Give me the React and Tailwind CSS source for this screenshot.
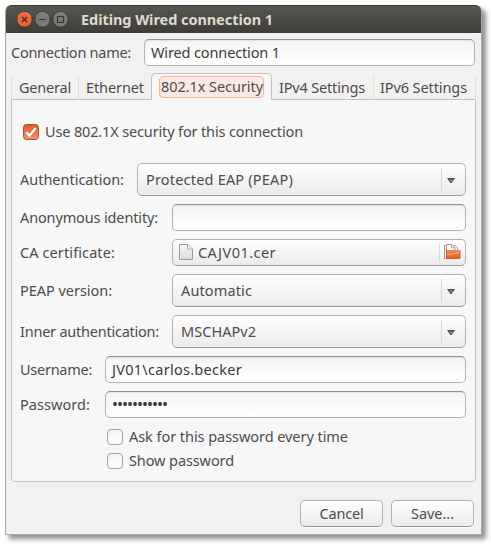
import { useLayoutEffect, useRef, useState } from "react";

// Single-line text whose tracking is adjusted so that it spans `width` pixels.
function Label({ width, className = "", children }) {
  const ref = useRef(null);
  const [spacing, setSpacing] = useState(0);
  useLayoutEffect(() => {
    const natural = ref.current.getBoundingClientRect().width;
    setSpacing((width - natural) / children.length);
  }, [width, children]);
  return (
    <span
      ref={ref}
      className={`inline-block shrink-0 whitespace-pre pb-[2px] ${className}`}
      style={{ letterSpacing: `${spacing}px` }}
    >
      {children}
    </span>
  );
}

const raised =
  "rounded-[5px] border border-[#b5b3b1] border-b-[#989694] bg-linear-to-b from-white to-[#eceaea] shadow-[0_1px_1px_rgba(255,255,255,0.9)]";
const field =
  "rounded-[5px] border border-[#b4b2b0] border-t-[#949290] bg-linear-to-b from-[#f4f4f4] to-white shadow-[inset_0_1px_1px_rgba(0,0,0,0.08)]";

function Row({ label, labelWidth, column, tall, children }) {
  return (
    <div className={`flex items-center ${tall ? "h-[33px]" : "h-[27px]"}`}>
      <div className={`flex shrink-0 ${column}`}>
        <Label width={labelWidth}>{label}</Label>
      </div>
      {children}
    </div>
  );
}

function Select({ value, width }) {
  return (
    <div className={`flex h-full min-w-0 flex-1 items-center pl-2 pr-[10px] ${raised}`}>
      <Label width={width}>{value}</Label>
      <div className="ml-auto flex h-[23px] items-center border-l border-[#d9d7d6] pl-[5px]">
        <svg className="mt-[2px]" width="8" height="6" viewBox="0 0 8 6">
          <path d="M.7 .5h6.600L4 5z" fill="#777" stroke="#484848" strokeWidth="1" />
        </svg>
      </div>
    </div>
  );
}

function Field({ value, width, textClass = "" }) {
  return (
    <div className={`flex h-full min-w-0 flex-1 items-center pl-[6px] text-[#3c3b37] ${field}`}>
      {value && <Label width={width} className={textClass}>{value}</Label>}
    </div>
  );
}

function EmptyCheck({ label, width }) {
  return (
    <div className="flex h-6 items-center gap-[6px]">
      <div className="size-4 rounded-[4px] border border-[#a5a3a1] bg-linear-to-b from-[#f3f3f3] to-white" />
      <Label width={width}>{label}</Label>
    </div>
  );
}

function FileIcon() {
  return (
    <svg className="-mt-px" width="14" height="16" viewBox="0 0 14 16">
      <defs>
        <linearGradient id="page" x1="0" y1="0" x2="0" y2="1">
          <stop offset="0" stopColor="#f6f6f6" />
          <stop offset="1" stopColor="#dcdcdc" />
        </linearGradient>
      </defs>
      <path d="M.5 .5h8l5 4.500v10.500H.5z" fill="url(#page)" stroke="#999" />
      <path d="M8.500 .8v4.200h4.700" fill="#fff" stroke="#aaa" />
    </svg>
  );
}

function FolderIcon() {
  return (
    <svg className="-mt-px" width="17" height="16" viewBox="0 0 17 16">
      <defs>
        <linearGradient id="folder" x1="0" y1="0" x2="0" y2="1">
          <stop offset="0" stopColor="#ef8a58" />
          <stop offset="1" stopColor="#ea5a24" />
        </linearGradient>
      </defs>
      <path d="M2 14.500H.5v-13h3" fill="#eee" stroke="#999" />
      <path d="M9.500 1.500h2l2 2.500v3" fill="#f4f4f4" stroke="#aaa" />
      <path d="M2.500 14V.5h5.500l3 3V7" fill="#f8f8f8" stroke="#999" />
      <path d="M7.500 .8v3h3" fill="none" stroke="#aaa" />
      <path d="M2.500 14.500v-8h13.500v7.500q0 .5-.5 .5z" fill="url(#folder)" stroke="#dc5a26" />
      <path d="M3 6.500h13" stroke="#e98556" />
      <path d="M3.200 10.500q6 0 12.300-2" fill="none" stroke="#f8b48e" strokeWidth=".8" />
    </svg>
  );
}

function WindowButton({ kind }) {
  const close = kind === "close";
  return (
    <svg width="17" height="17" viewBox="0 0 17 17">
      <circle cx="8.500" cy="8.500" r="7.600" fill={close ? "#ee6637" : "#7b7a74"} stroke={close ? "#46352d" : "#383733"} strokeWidth=".8" />
      <path d="M2.200 5.500a7 7 0 0 1 12.600 0" fill="none" stroke={close ? "#f7a27d" : "#96948c"} strokeWidth=".8" />
      {close && <path d="M6 6l5 5M11 6l-5 5" stroke="#4b2a1c" strokeWidth="1.400" />}
      {kind === "minimize" && <path d="M5 8.500h7" stroke="#3a3935" strokeWidth="1.200" />}
      {kind === "maximize" && <path d="M5.500 5.500h6v6h-6z" fill="none" stroke="#3a3935" strokeWidth="1.200" />}
    </svg>
  );
}

function Tab({ className, width, children }) {
  return (
    <div className={`flex h-6 items-center border-r ${className}`}>
      <Label width={width}>{children}</Label>
    </div>
  );
}

export default function App() {
  return (
    <div className="h-[544px] w-[491px] overflow-hidden bg-white pl-[5px] pt-[5px] font-['Noto_Sans','Open_Sans',sans-serif] text-[14.5px] leading-5 text-[#4c4c4c]">
      <div className="flex h-[530px] w-[477px] flex-col overflow-hidden rounded-t-[6px] border-b border-l border-r border-[#aaa8a6] bg-[#f2f1f0] shadow-[4px_4px_5px_rgba(0,0,0,0.45)]">
        <div className="-mx-px flex h-7 shrink-0 items-center rounded-t-[6px] border-t border-[#3b3a36] bg-linear-to-b from-[#575650] to-[#3e3d39] pl-[11px] text-[#dfdbd2]">
          <div className="flex gap-px">
            <WindowButton kind="close" />
            <WindowButton kind="minimize" />
            <WindowButton kind="maximize" />
          </div>
          <Label className="ml-3 font-bold" width={192}>Editing Wired connection 1</Label>
        </div>

        <div className="mt-[6px] flex h-[27px] shrink-0 items-center pl-[5px] pr-[6px]">
          <div className="flex w-[133px] shrink-0">
            <Label width={120}>Connection name:</Label>
          </div>
          <Field value="Wired connection 1" width={129} />
        </div>

        <div className="z-10 mx-[5px] mt-[7px] -mb-px flex h-[27px] shrink-0 items-end">
          <Tab className="w-[68px] border-l border-[#e0dfde] pl-[7px]" width={52}>General</Tab>
          <Tab className="w-[72px] border-transparent pl-[7px]" width={58}>Ethernet</Tab>
          <div className="flex h-[27px] w-[121px] rounded-t-[5px] border border-b-0 border-[#c3c1c0] bg-[#f7f7f7] pl-[7px] pt-[2px]">
            <div className="flex h-[22px] w-[105px] items-center rounded-[4px] border border-[#f5b497] bg-[#fae9e3] pl-px">
              <Label width={102}>802.1x Security</Label>
            </div>
          </div>
          <Tab className="w-[102px] border-[#e0dfde] pl-[7px]" width={86}>IPv4 Settings</Tab>
          <Tab className="w-[102px] border-[#e0dfde] pl-[6px]" width={87}>IPv6 Settings</Tab>
        </div>

        <div className="mx-[5px] flex h-[383px] shrink-0 flex-col rounded-b-[4px] border border-[#c3c1c0] bg-[#f7f7f7] pl-2 pr-[9px]">
          <div className="mt-[22px] flex h-5 shrink-0 items-center gap-[6px] pl-[3px]">
            <svg width="16" height="16" viewBox="0 0 16 16">
              <defs>
                <linearGradient id="check" x1="0" y1="0" x2="0" y2="1">
                  <stop offset="0" stopColor="#d95c28" />
                  <stop offset="1" stopColor="#ec9875" />
                </linearGradient>
              </defs>
              <rect x=".5" y=".5" width="15" height="15" rx="3" fill="url(#check)" stroke="#a85331" />
              <path d="M3.200 8.200l3.200 3.500 6.300-7.600" fill="none" stroke="#fff" strokeWidth="2.200" />
            </svg>
            <Label width={258}>Use 802.1X security for this connection</Label>
          </div>

          <div className="mt-[21px] flex flex-col gap-2">
            <Row label="Authentication:" labelWidth={104} column="w-[117px]" tall>
              <Select value="Protected EAP (PEAP)" width={147} />
            </Row>
            <Row label="Anonymous identity:" labelWidth={138} column="w-[152px]">
              <Field />
            </Row>
            <Row label="CA certificate:" labelWidth={95} column="w-[152px]">
              <div className={`flex h-full min-w-0 flex-1 items-center pl-[6px] pr-[4px] ${raised}`}>
                <FileIcon />
                <Label className="ml-[5px]" width={78}>CAJV01.cer</Label>
                <div className="ml-auto flex h-[18px] items-center border-l border-[#dddbda] pl-[4px]">
                  <FolderIcon />
                </div>
              </div>
            </Row>
            <Row label="PEAP version:" labelWidth={92} column="w-[152px]" tall>
              <Select value="Automatic" width={71} />
            </Row>
            <Row label="Inner authentication:" labelWidth={139} column="w-[152px]" tall>
              <Select value="MSCHAPv2" width={75} />
            </Row>
            <Row label="Username:" labelWidth={72} column="w-[85px]">
              <Field value="JV01\carlos.becker" width={130} />
            </Row>
            <Row label="Password:" labelWidth={70} column="w-[85px]">
              <Field value="•••••••••••" width={55} textClass="text-[16px]" />
            </Row>
          </div>

          <div className="mt-[7px] pl-[87px]">
            <EmptyCheck label="Ask for this password every time" width={219} />
            <EmptyCheck label="Show password" width={105} />
          </div>
        </div>

        <div className="mt-[18px] flex shrink-0 justify-end gap-2 pr-[7px]">
          <button className={`flex h-[27px] w-[83px] items-center justify-center ${raised}`}>
            <Label width={44}>Cancel</Label>
          </button>
          <button className={`flex h-[27px] w-[83px] items-center justify-center ${raised}`}>
            <Label width={43}>Save...</Label>
          </button>
        </div>
      </div>
    </div>
  );
}
